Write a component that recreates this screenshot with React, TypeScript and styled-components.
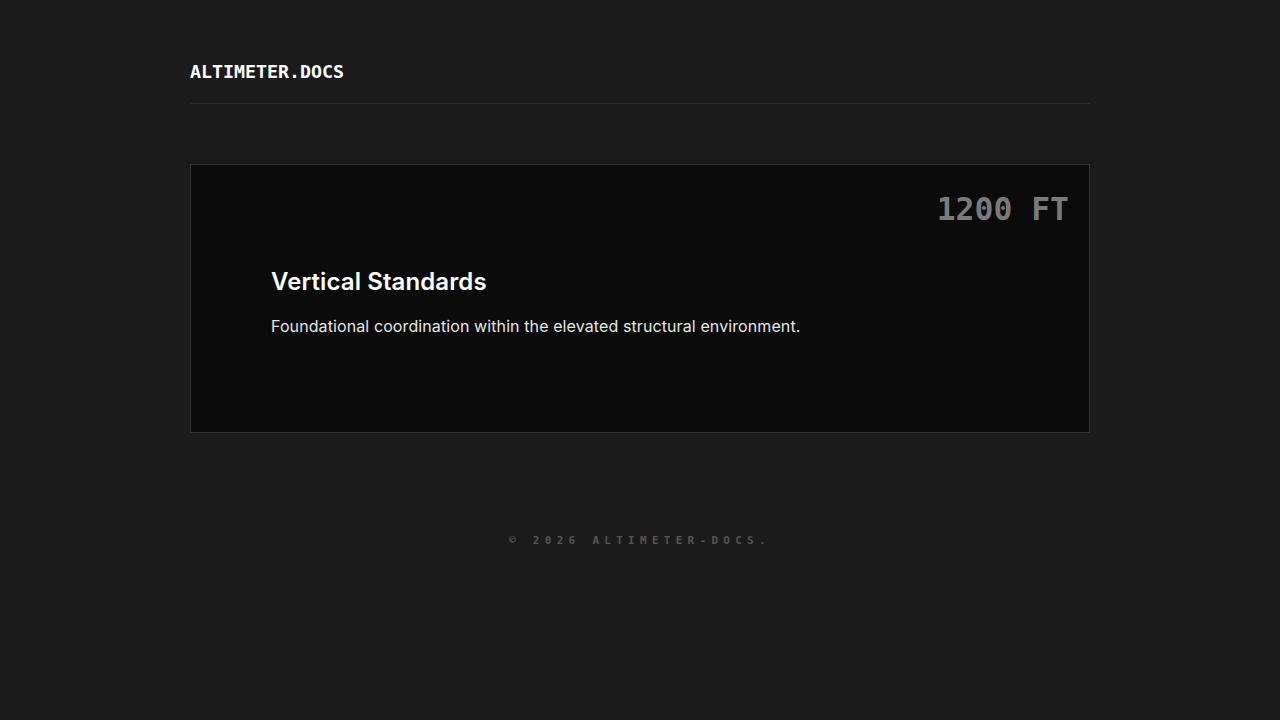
import React from 'react';
import styled, { createGlobalStyle } from 'styled-components';

const GlobalStyle = createGlobalStyle`
  html, body {
    margin: 0;
    padding: 0;
    background: #1b1b1b;
  }
  body {
    font-family: Inter, "Noto Sans", sans-serif;
    color: #fff;
  }
`;

const Page = styled.div`
  width: 900px;
  margin: 0 auto;
  padding-top: 61px;
`;

const Header = styled.header`
  display: flex;
  align-items: center;
  padding-bottom: 20px;
  border-bottom: 1px solid #2c2c2c;
`;

const Brand = styled.div`
  font-family: "DejaVu Sans Mono", monospace;
  font-weight: 700;
  font-size: 18.3px;
  line-height: 22px;
  color: #fff;
`;

const Card = styled.section`
  position: relative;
  margin-top: 60px;
  background: #0b0b0b;
  border: 1px solid #333;
  padding: 102px 80px 0;
  height: 269px;
  box-sizing: border-box;
`;

// altitude tag pinned to the card's top-right corner
const Altitude = styled.div`
  position: absolute;
  top: 24px;
  right: 20px;
  font-family: "DejaVu Sans Mono", monospace;
  font-weight: 700;
  font-size: 31.4px;
  line-height: 40px;
  color: #7a7a7a;
`;

const Title = styled.h2`
  margin: 0;
  font-size: 24px;
  font-weight: 600;
  line-height: 30px;
  letter-spacing: 0.1px;
`;

const Text = styled.p`
  margin: 17px 0 0;
  font-size: 16px;
  line-height: 24px;
  color: #e6e6e6;
  letter-spacing: 0.1px;
`;

const Footer = styled.footer`
  margin-top: 101px;
  text-align: center;
  font-family: "DejaVu Sans Mono", monospace;
  font-weight: 700;
  font-size: 11px;
  letter-spacing: 0.48em;
  color: #555;
`;

export default function App() {
  return (
    <>
      <GlobalStyle />
      <Page>
        <Header>
          <Brand>ALTIMETER.DOCS</Brand>
        </Header>
        <Card>
          <Altitude>1200 FT</Altitude>
          <Title>Vertical Standards</Title>
          <Text>Foundational coordination within the elevated structural environment.</Text>
        </Card>
        <Footer>© 2026 ALTIMETER-DOCS.</Footer>
      </Page>
    </>
  );
}
